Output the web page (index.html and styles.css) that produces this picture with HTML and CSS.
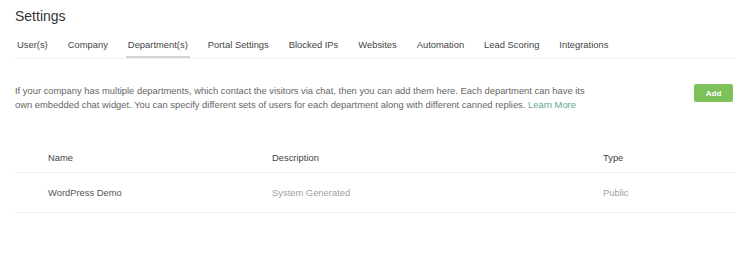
FILE: index.html
```html
<!DOCTYPE html>
<html lang="en">
<head>
    <meta charset="UTF-8">
    <meta name="viewport" content="width=device-width, initial-scale=1.0">
    <title>Settings - Departments</title>
    <link rel="stylesheet" href="styles.css">
</head>
<body>
    <div class="page">
        <h1 class="page-title">Settings</h1>

        <nav class="tabs">
            <a href="#" class="tab">User(s)</a>
            <a href="#" class="tab">Company</a>
            <a href="#" class="tab active">Department(s)</a>
            <a href="#" class="tab">Portal Settings</a>
            <a href="#" class="tab">Blocked IPs</a>
            <a href="#" class="tab">Websites</a>
            <a href="#" class="tab">Automation</a>
            <a href="#" class="tab">Lead Scoring</a>
            <a href="#" class="tab">Integrations</a>
        </nav>

        <div class="intro">
            <p class="intro-text">If your company has multiple departments, which contact the visitors via chat, then you can add them here. Each department can have its own embedded chat widget. You can specify different sets of users for each department along with different canned replies. <a href="#" class="learn-more">Learn More</a></p>
            <button type="button" class="add-button">Add</button>
        </div>

        <div class="dept-table">
            <div class="dept-row dept-head">
                <div>Name</div>
                <div>Description</div>
                <div>Type</div>
            </div>
            <div class="dept-row">
                <div class="dept-name">WordPress Demo</div>
                <div class="muted">System Generated</div>
                <div class="muted">Public</div>
            </div>
        </div>
    </div>
</body>
</html>
```

FILE: styles.css
```css
body {
    font-family: Arial, 'Liberation Sans', sans-serif;
    margin: 0;
    padding: 0;
    background: #fff;
    color: #555;
}

.page {
    padding: 6px 15px 0;
}

.page-title {
    font-size: 14px;
    font-weight: 400;
    line-height: 20px;
    color: #333;
    margin: 0;
}

/* Tabs */
.tabs {
    display: flex;
    gap: 16px;
    margin-top: 12px;
    border-bottom: 1px solid #f2f2f2;
}
.tab {
    font-size: 9.4px;
    line-height: 14px;
    color: #444;
    text-decoration: none;
    padding: 0 2px 4px;
    border-bottom: 2px solid transparent;
}
.tab.active {
    border-bottom-color: #d4d4d4;
}

/* Intro */
.intro {
    display: flex;
    align-items: flex-start;
    justify-content: space-between;
    margin-top: 25px;
}
.intro-text {
    font-size: 9.4px;
    line-height: 14px;
    color: #666;
    max-width: 578px;
    margin: 0;
}
.learn-more {
    color: #65a98c;
    text-decoration: none;
}
.add-button {
    width: 39px;
    height: 18px;
    margin-right: 2px;
    border: none;
    border-radius: 2px;
    background-color: #7cc15a;
    color: #fff;
    font-family: inherit;
    font-size: 8px;
    font-weight: 700;
    padding: 0;
    cursor: pointer;
}

/* Table */
.dept-table {
    margin-top: 21px;
    width: 720px;
}
.dept-row {
    display: grid;
    grid-template-columns: 224px 331px 1fr;
    padding-left: 33px;
    font-size: 9.4px;
    line-height: 14px;
    border-bottom: 1px solid #f0f0f0;
    height: 39px;
    align-items: center;
}
.dept-head {
    color: #444;
    padding-top: 10px;
    height: 29px;
}
.dept-name {
    color: #555;
}
.muted {
    color: #a0a0a0;
}
```
